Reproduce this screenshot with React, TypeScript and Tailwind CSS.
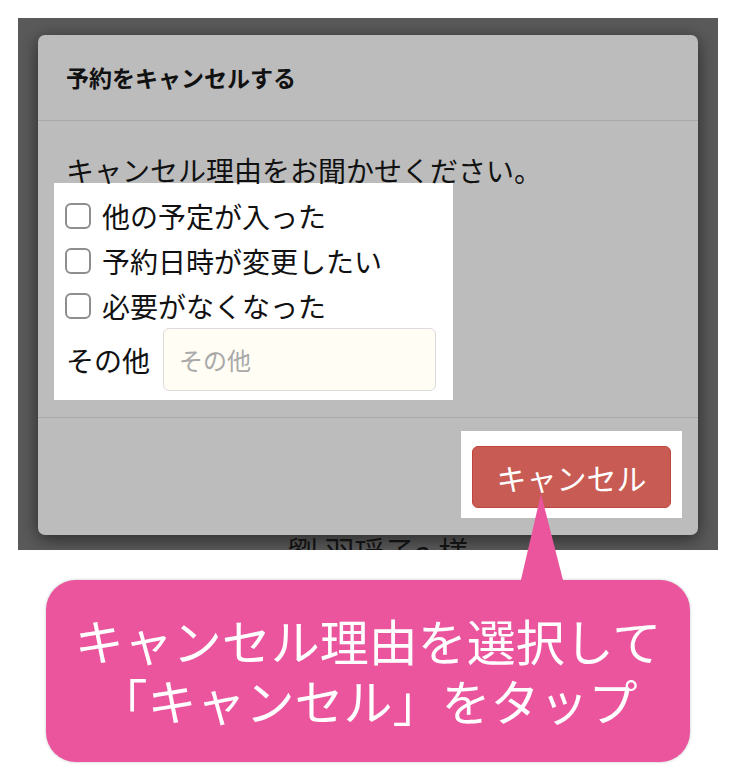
import React from 'react'

const REASONS = ['他の予定が入った', '予約日時が変更したい', '必要がなくなった']

function Reason({ label }: { label: string }) {
  return (
    <label className="flex h-[45px] items-center">
      <input
        type="checkbox"
        className="h-[26px] w-[26px] shrink-0 appearance-none rounded-[6px] border-2 border-[#8e8e8e] bg-white"
      />
      <span className="ml-[11px] text-[28px] leading-[28px]">{label}</span>
    </label>
  )
}

export default function App() {
  return (
    <div
      className="relative h-[780px] w-[736px] overflow-hidden bg-white text-[#111]"
      style={{ fontFamily: '"Noto Sans CJK JP", "Noto Sans", sans-serif' }}
    >
      {/* dimmed screenshot */}
      <div className="ml-[18px] mt-[18px] h-[532px] w-[700px] overflow-hidden bg-[#5a5a5a] pl-[20px] pt-[17px]">
        <div className="flex h-[500px] w-[660px] flex-col rounded-[7px] bg-[#bcbcbc] shadow-[0_4px_18px_rgba(0,0,0,0.55)]">
          <div className="flex h-[86px] items-center border-b border-[#a8a8a8] pl-[28px] text-[23px] font-bold">
            予約をキャンセルする
          </div>

          <div className="h-[296px] px-4 pt-[35px]">
            <p className="pl-3 text-[28px] leading-[28px]">キャンセル理由をお聞かせください。</p>
            <div className="-mt-px w-[399px] bg-white pb-[9px] pl-[11px] pt-[10px]">
              {REASONS.map((r) => (
                <Reason key={r} label={r} />
              ))}
              <div className="flex h-[63px] items-center">
                <span className="ml-px mr-[13px] text-[28px] leading-[28px]">その他</span>
                <input
                  placeholder="その他"
                  className="h-[63px] w-[273px] rounded-[6px] border border-[#dcdcdc] bg-[#fffdf4] pl-[15px] text-[24px] outline-none placeholder:text-[#a9a9a9]"
                />
              </div>
            </div>
          </div>

          <div className="flex h-[118px] items-start justify-end border-t border-[#a8a8a8] pr-4 pt-[13px]">
            <div className="h-[87px] w-[221px] bg-white pl-[11px] pt-[15px]">
              <button className="h-[62px] w-[199px] rounded-[6px] border border-[#c0453d] bg-[#c85b53] text-[30px] leading-[30px] text-white">
                キャンセル
              </button>
            </div>
          </div>
        </div>
        <p className="text-center text-[30px] leading-[30px] text-[#111]">劉 羽瑶子a 様</p>
      </div>

      {/* callout */}
      <div className="ml-[46px] mt-[30px] h-[182px] w-[644px] rounded-[30px] bg-[#ea559d] pt-[30px] text-center text-[49px] leading-[60px] text-white shadow-[0_0_3px_rgba(0,0,0,0.25)]">
        キャンセル理由を選択して
        <br />
        「キャンセル」をタップ
      </div>
      <svg className="absolute left-[520px] top-[494px]" width="44" height="90" viewBox="0 0 44 90">
        <polygon points="21,0 0,90 44,90" fill="#ea559d" />
      </svg>
    </div>
  )
}
